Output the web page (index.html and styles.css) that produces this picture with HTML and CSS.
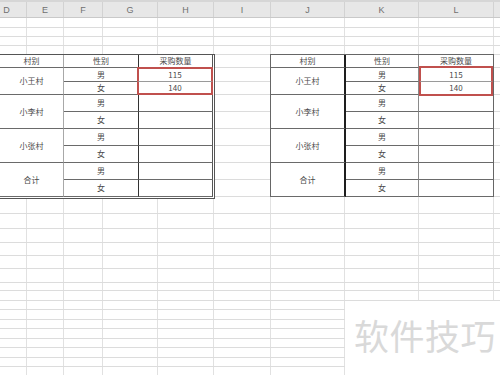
FILE: index.html
```html
<!DOCTYPE html>
<html lang="zh">
<head>
<meta charset="utf-8">
<title>采购数量</title>
<link rel="stylesheet" href="styles.css">
</head>
<body>
<div class="sheet">
  <div class="colhead">
    <div class="ch w-d">D</div>
    <div class="ch w-e">E</div>
    <div class="ch w-f">F</div>
    <div class="ch w-g">G</div>
    <div class="ch w-h">H</div>
    <div class="ch w-i">I</div>
    <div class="ch w-j">J</div>
    <div class="ch w-k">K</div>
    <div class="ch w-l">L</div>
    <div class="ch w-m"></div>
  </div>
  <div class="grid">
    <div class="row h10"></div>
    <div class="row h9"></div>
    <div class="row h9"></div>
    <div class="row h8 nob"></div>

    <div class="band">
      <div class="tbl left">
        <div class="c k1">村别</div>
        <div class="c k2">性别</div>
        <div class="c k3">采购数量</div>

        <div class="c k1 v">小王村</div>
        <div class="c k2">男</div>
        <div class="c k3 sel-top">115</div>
        <div class="c k2">女</div>
        <div class="c k3 sel-bot">140</div>

        <div class="c k1 v">小李村</div>
        <div class="c k2">男</div>
        <div class="c k3"></div>
        <div class="c k2">女</div>
        <div class="c k3"></div>

        <div class="c k1 v">小张村</div>
        <div class="c k2">男</div>
        <div class="c k3"></div>
        <div class="c k2">女</div>
        <div class="c k3"></div>

        <div class="c k1 v">合计</div>
        <div class="c k2">男</div>
        <div class="c k3"></div>
        <div class="c k2">女</div>
        <div class="c k3"></div>
      </div>

      <div class="spacer gap">
        <div class="row h13"></div><div class="row h14"></div><div class="row h13"></div>
        <div class="row h17"></div><div class="row h17"></div><div class="row h17"></div>
        <div class="row h17"></div><div class="row h17"></div><div class="row h17"></div>
      </div>

      <div class="tbl right">
        <div class="c k1">村别</div>
        <div class="c k2">性别</div>
        <div class="c k3">采购数量</div>

        <div class="c k1 v">小王村</div>
        <div class="c k2">男</div>
        <div class="c k3 sel-top">115</div>
        <div class="c k2">女</div>
        <div class="c k3 sel-bot">140</div>

        <div class="c k1 v">小李村</div>
        <div class="c k2">男</div>
        <div class="c k3"></div>
        <div class="c k2">女</div>
        <div class="c k3"></div>

        <div class="c k1 v">小张村</div>
        <div class="c k2">男</div>
        <div class="c k3"></div>
        <div class="c k2">女</div>
        <div class="c k3"></div>

        <div class="c k1 v">合计</div>
        <div class="c k2">男</div>
        <div class="c k3"></div>
        <div class="c k2">女</div>
        <div class="c k3"></div>
      </div>

      <div class="spacer edge">
        <div class="row h13"></div><div class="row h14"></div><div class="row h13"></div>
        <div class="row h17"></div><div class="row h17"></div><div class="row h17"></div>
        <div class="row h17"></div><div class="row h17"></div><div class="row h17"></div>
      </div>
    </div>

    <div class="row h15"></div>
    <div class="row h15"></div>
    <div class="row h14"></div>
    <div class="row h13"></div>
    <div class="row h13"></div>
    <div class="row h14"></div>
    <div class="row h8"></div>
    <div class="row h10"></div>
    <div class="row h9"></div>
    <div class="row h10"></div>
    <div class="row h9"></div>
    <div class="row h10"></div>
    <div class="row h9"></div>
    <div class="row h10"></div>
    <div class="row h9"></div>
    <div class="row h9"></div>
  </div>
  <div class="wm">软件技巧</div>
</div>
</body>
</html>
```

FILE: styles.css
```css
html, body {
  margin: 0;
  padding: 0;
  background: #fff;
}

.sheet {
  position: relative;
  width: 500px;
  height: 375px;
  overflow: hidden;
  font-family: "Noto Sans CJK SC", "Noto Sans", sans-serif;
}

/* column header band */
.colhead {
  display: flex;
  height: 18px;
  box-sizing: border-box;
  background: #e7e7e7;
  border-top: 2px solid #d6d6d6;
  border-bottom: 1px solid #c9c9c9;
}

.ch {
  box-sizing: border-box;
  border-right: 1px solid #d2d2d2;
  font: 9px "Liberation Sans", Arial, sans-serif;
  color: #707070;
  text-align: center;
  line-height: 11px;
  padding-top: 3px;
}

.w-d { width: 27px; padding-right: 13px; }
.w-e { width: 37px; }
.w-f { width: 39px; }
.w-g { width: 55px; }
.w-h { width: 56px; }
.w-i { width: 57px; }
.w-j { width: 74px; }
.w-k { width: 74px; }
.w-l { width: 75px; }
.w-m { width: 6px; border-right: none; }

/* cell grid */
.grid {
  height: 357px;
  background-image:
    linear-gradient(#e1e1e1, #e1e1e1),
    linear-gradient(#e1e1e1, #e1e1e1),
    linear-gradient(#e1e1e1, #e1e1e1),
    linear-gradient(#e1e1e1, #e1e1e1),
    linear-gradient(#e1e1e1, #e1e1e1),
    linear-gradient(#e1e1e1, #e1e1e1),
    linear-gradient(#e1e1e1, #e1e1e1),
    linear-gradient(#e1e1e1, #e1e1e1),
    linear-gradient(#e1e1e1, #e1e1e1);
  background-size: 1px 100%;
  background-repeat: no-repeat;
  background-position:
    26px 0, 63px 0, 102px 0, 157px 0, 213px 0,
    270px 0, 344px 0, 418px 0, 493px 0;
}

.row {
  box-sizing: border-box;
  border-bottom: 1px solid #dcdcdc;
}
.row.nob { border-bottom: none; }

.h8 { height: 8px; }
.h9 { height: 9px; }
.h10 { height: 10px; }
.h13 { height: 13px; }
.h14 { height: 14px; }
.h15 { height: 15px; }
.h17 { height: 17px; }

.band {
  display: flex;
  align-items: flex-start;
}

.spacer {
  border-top: 1px solid #dcdcdc;
}
.gap { width: 55px; }
.edge { width: 6px; }

/* data tables */
.tbl {
  display: grid;
  grid-template-rows: 13px 14px 13px repeat(6, 17px);
  background: #fff;
  font-size: 8px;
  color: #4a4a4a;
}

.c {
  display: flex;
  align-items: center;
  justify-content: center;
  box-sizing: border-box;
  border-bottom: 1px solid #6a6a6a;
  border-right: 1px solid #6a6a6a;
  line-height: 1;
  white-space: nowrap;
}

.v { grid-row: span 2; }

.tbl.left {
  grid-template-columns: 64px 75px 74px;
  border-top: 1px solid #555;
  border-right: 1px solid #555;
  border-bottom: 1px solid #555;
  padding: 0 1px 1px 0;
}
.left .k1 { border-right-color: #a8a8a8; }
.left .k2 { border-right-color: #333; }
.left .k3 { border-right-color: #555; }

.tbl.right {
  grid-template-columns: 75px 73px 74px;
  border: 1px solid #666;
  border-bottom: none;
}
.right .k1 { border-right: 2px solid #1e1e1e; }
.right .k2 { border-right-color: #8a8a8a; }
.right .k3 { border-right: none; }

/* red highlight around the filled values */
.sel-top,
.sel-bot {
  border-left: 2px solid #c0504d;
  border-right: 2px solid #c0504d;
}
.sel-top {
  border-top: 2px solid #c0504d;
  border-bottom-color: #9a9a9a;
}
.sel-bot {
  border-bottom: 2px solid #c0504d;
}
.left .sel-top { margin: -1px 0 0 -2px; border-right: 2px solid #c0504d; }
.left .sel-bot { margin-left: -2px; border-right: 2px solid #c0504d; }
.right .sel-top { margin-top: -2px; border-right: 2px solid #c0504d; }
.right .sel-bot { margin-bottom: -1px; border-right: 2px solid #c0504d; }

/* watermark */
.wm {
  position: absolute;
  left: 345px;
  top: 301px;
  width: 155px;
  height: 74px;
  box-sizing: border-box;
  padding: 16px 0 0 9px;
  background: #fff;
  font-family: "Noto Sans CJK SC", sans-serif;
  font-size: 35px;
  line-height: 1;
  color: #d9d9d9;
  letter-spacing: 0.5px;
  white-space: nowrap;
}
```
